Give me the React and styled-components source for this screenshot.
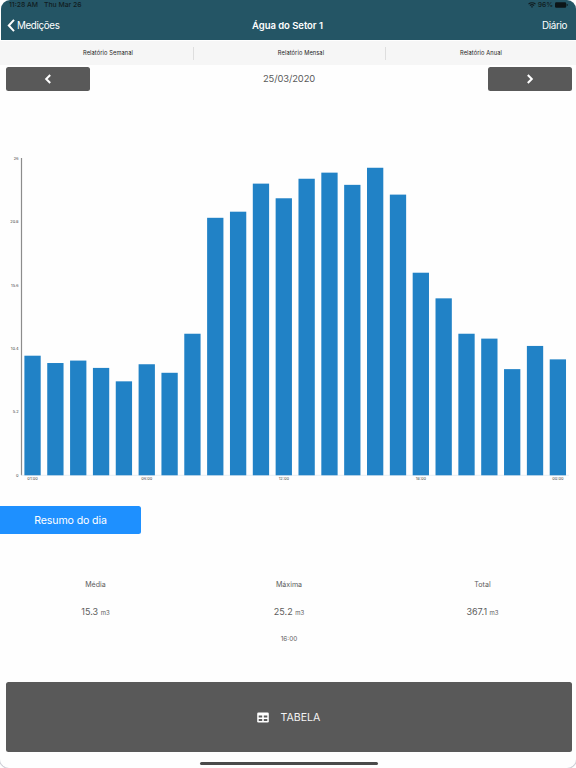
import React from "react";
import styled, { createGlobalStyle } from "styled-components";

// m3 per hour, from 01:00 to 00:00
const readings = [
    9.8, 9.2, 9.4, 8.8, 7.7, 9.1, 8.4, 11.6,
    21.1, 21.6, 23.9, 22.7, 24.3, 24.8, 23.8, 25.2,
    23.0, 16.6, 14.5, 11.6, 11.2, 8.7, 10.6, 9.5,
];

const yTicks = ["26", "20.8", "15.6", "10.4", "5.2", "0"];

const xTicks = [
    { bar: 0, label: "01:00" },
    { bar: 5, label: "06:00" },
    { bar: 11, label: "12:00" },
    { bar: 17, label: "18:00" },
    { bar: 23, label: "00:00" },
];

const reports = [
    { label: "Relatório Semanal", indent: "21px" },
    { label: "Relatório Mensal", indent: "23px" },
    { label: "Relatório Anual", indent: "1px" },
];

const summary = [
    { title: "Média", value: "15.3", unit: "m3" },
    { title: "Máxima", value: "25.2", unit: "m3", time: "16:00" },
    { title: "Total", value: "367.1", unit: "m3" },
];

const PLOT_TOP = 8;
const PLOT_HEIGHT = 317.3;
const BASELINE = PLOT_TOP + PLOT_HEIGHT;
const FIRST_BAR = 24.4;
const BAR_STEP = 22.84;
const BAR_WIDTH = 16.3;

function Chart() {
    return (
        <ChartSvg width="576" height="340" viewBox="0 0 576 340">
            <line x1="21.5" x2="21.5" y1={PLOT_TOP} y2={BASELINE} stroke="#8c8c8c" strokeWidth="1.2" />
            <line x1="21" x2="569" y1={BASELINE} y2={BASELINE} stroke="#d9e4ec" strokeWidth="0.6" />
            {yTicks.map((tick, i) => (
                <text key={tick} x="18.6" y={PLOT_TOP + (PLOT_HEIGHT / 5) * i + 1.6} textAnchor="end">
                    {tick}
                </text>
            ))}
            {readings.map((value, i) => {
                const height = (value / 26) * PLOT_HEIGHT;
                return (
                    <rect
                        key={i}
                        x={FIRST_BAR + BAR_STEP * i}
                        y={BASELINE - height}
                        width={BAR_WIDTH}
                        height={height}
                        fill="#2182c6"
                    />
                );
            })}
            {xTicks.map(({ bar, label }) => (
                <text
                    key={label}
                    x={FIRST_BAR + BAR_STEP * bar + BAR_WIDTH / 2}
                    y={BASELINE + 4.6}
                    textAnchor="middle"
                >
                    {label}
                </text>
            ))}
        </ChartSvg>
    );
}

function WifiIcon() {
    return (
        <svg width="8" height="6" viewBox="0 0 16 12">
            <path d="M1 4.2a10.5 10.5 0 0 1 14 0" fill="none" stroke="#101c20" strokeWidth="2.4" />
            <path d="M3.8 7.2a6.3 6.3 0 0 1 8.4 0" fill="none" stroke="#101c20" strokeWidth="2.2" />
            <path d="M5.8 9.2a3.4 3.4 0 0 1 4.4 0L8 11.8z" fill="#101c20" />
        </svg>
    );
}

function BatteryIcon() {
    return (
        <svg width="13" height="6" viewBox="0 0 13 6">
            <rect x="0" y="0.3" width="11.2" height="5.4" rx="1.3" fill="#0c1518" />
            <rect x="11.7" y="2" width="0.9" height="2" rx="0.4" fill="#0c1518" />
        </svg>
    );
}

function BackIcon() {
    return (
        <svg width="8" height="13" viewBox="0 0 8 13">
            <path d="M7 0.9 1.8 6.5l5.2 5.6" fill="none" stroke="#fff" strokeWidth="2" />
        </svg>
    );
}

function ArrowIcon({ next }) {
    return (
        <svg width="8" height="10" viewBox="0 0 8 10">
            <path
                d={next ? "M1.8 1 5.8 5l-4 4" : "M6.2 1 2.2 5l4 4"}
                fill="none"
                stroke="#fff"
                strokeWidth="2"
            />
        </svg>
    );
}

function TableIcon() {
    return (
        <svg width="12" height="11" viewBox="0 0 12 11">
            <rect x="0.2" y="0.4" width="11.6" height="10.2" rx="1.3" fill="#fff" />
            <path d="M1.7 3.4h3.5v2H1.7zM6.8 3.4h3.5v2H6.8zM1.7 6.9h3.5v2H1.7zM6.8 6.9h3.5v2H6.8z" fill="#595959" />
        </svg>
    );
}

export default function App() {
    return (
        <>
            <GlobalStyle />
            <Screen>
                <Header>
                    <StatusBar>
                        <StatusGroup $gap="6px">
                            <span>11:28 AM</span>
                            <span>Thu Mar 26</span>
                        </StatusGroup>
                        <StatusGroup $gap="2px">
                            <WifiIcon />
                            <span>96%</span>
                            <BatteryIcon />
                        </StatusGroup>
                    </StatusBar>
                    <NavBar>
                        <BackLink>
                            <BackIcon />
                            Medições
                        </BackLink>
                        <Title>Água do Setor 1</Title>
                        <Period>Diário</Period>
                    </NavBar>
                </Header>
                <Reports>
                    {reports.map(({ label, indent }) => (
                        <Report key={label} $indent={indent}>{label}</Report>
                    ))}
                </Reports>
                <DateRow>
                    <ArrowButton>
                        <ArrowIcon />
                    </ArrowButton>
                    <DateText>25/03/2020</DateText>
                    <ArrowButton>
                        <ArrowIcon next />
                    </ArrowButton>
                </DateRow>
                <Chart />
                <SummaryTag>Resumo do dia</SummaryTag>
                <Summary>
                    {summary.map(({ title, value, unit, time }) => (
                        <SummaryItem key={title}>
                            <SummaryTitle>{title}</SummaryTitle>
                            <SummaryValue>
                                {value} <small>{unit}</small>
                            </SummaryValue>
                            {time && <SummaryTime>{time}</SummaryTime>}
                        </SummaryItem>
                    ))}
                </Summary>
                <TableButton>
                    <TableIcon />
                    TABELA
                </TableButton>
                <HomeIndicator />
                <Corner $side="left" />
                <Corner $side="right" />
            </Screen>
        </>
    );
}

const GlobalStyle = createGlobalStyle`
  * {
    box-sizing: border-box;
  }

  body {
    margin: 0;
    background-color: #fefefe;
    font-family: Inter, "Liberation Sans", sans-serif;
  }

  button {
    border: none;
    padding: 0;
    font-family: inherit;
  }

  svg {
    display: block;
    flex-shrink: 0;
  }
`;

const Screen = styled.div`
  position: relative;
  width: 576px;
  height: 768px;
  display: flex;
  flex-direction: column;
  overflow: hidden;
  background-color: #fefefe;
`;

const Header = styled.header`
  height: 40px;
  margin-left: 1px;
  background-color: #245565;
  border-radius: 9px 9px 0 0;
`;

const StatusBar = styled.div`
  display: flex;
  justify-content: space-between;
  height: 10px;
  padding: 0 8px;
  color: #101c20;
  font-size: 6.8px;
  font-weight: 500;
  line-height: 10px;
`;

const StatusGroup = styled.div`
  display: flex;
  align-items: center;
  gap: ${({ $gap }) => $gap};
`;

const NavBar = styled.nav`
  display: grid;
  grid-template-columns: 1fr auto 1fr;
  align-items: center;
  height: 31px;
  padding: 0 9px 0 6px;
  color: white;
  font-size: 9.8px;
  letter-spacing: -0.35px;
`;

const BackLink = styled.div`
  display: flex;
  align-items: center;
  gap: 2px;
`;

const Title = styled.h1`
  margin: 0 0 0 1px;
  font-size: 9.5px;
  font-weight: 600;
  letter-spacing: -0.05px;
`;

const Period = styled.div`
  text-align: right;
`;

const Reports = styled.div`
  display: grid;
  grid-template-columns: repeat(3, 192px);
  align-items: center;
  height: 24px;
  margin-top: 1px;
  padding-left: 2px;
  background-color: #f6f6f6;
`;

const Report = styled.div`
  height: 13px;
  padding-left: ${({ $indent }) => $indent};
  color: #222;
  font-size: 5.7px;
  line-height: 12px;
  text-align: center;
  letter-spacing: 0.1px;

  &:not(:last-child) {
    border-right: 1px solid #dedede;
  }

  &:last-child {
    padding-right: 3px;
  }
`;

const DateRow = styled.div`
  display: flex;
  justify-content: space-between;
  height: 24px;
  margin: 2px 4px 0 6px;
`;

const ArrowButton = styled.button`
  display: flex;
  align-items: center;
  justify-content: center;
  width: 84px;
  height: 24px;
  border-radius: 2.5px;
  background-color: #595959;
`;

const DateText = styled.div`
  color: #5a5a5a;
  font-size: 9.4px;
  line-height: 23px;
  letter-spacing: -0.1px;
`;

const ChartSvg = styled.svg`
  margin-top: 59px;

  text {
    fill: #444;
    font-size: 4px;
  }
`;

const SummaryTag = styled.div`
  width: 141px;
  height: 28px;
  margin-top: 16px;
  border-radius: 0 2.5px 2.5px 0;
  background-color: #1e90ff;
  color: white;
  font-size: 10.6px;
  line-height: 29px;
  text-align: center;
  letter-spacing: -0.13px;
`;

const Summary = styled.div`
  display: grid;
  grid-template-columns: repeat(3, 193.5px);
  justify-content: center;
  height: 103px;
  margin-top: 45px;
  padding-left: 2px;
  color: #5c5c5c;
  text-align: center;
`;

const SummaryItem = styled.div`
  display: flex;
  flex-direction: column;
`;

const SummaryTitle = styled.div`
  font-size: 7.1px;
  line-height: 12px;
`;

const SummaryValue = styled.div`
  margin-top: 13px;
  font-size: 9px;
  line-height: 16px;

  small {
    font-size: 6px;
  }
`;

const SummaryTime = styled.div`
  margin-top: 12px;
  font-size: 6.4px;
  line-height: 12px;
`;

const TableButton = styled.button`
  display: flex;
  align-items: center;
  justify-content: center;
  gap: 12px;
  height: 70px;
  flex-shrink: 0;
  margin: 0 4px 0 6px;
  padding-right: 1px;
  border-radius: 2.5px;
  background-color: #595959;
  color: #f4f4f4;
  font-size: 10.6px;
`;

const HomeIndicator = styled.div`
  width: 178px;
  height: 3px;
  margin: 9.5px 0 0 200px;
  border-radius: 2px;
  background-color: #4a4a4a;
`;

// rounded edge of the device at the bottom of the screen
const Corner = styled.div`
  position: absolute;
  bottom: -1px;
  ${({ $side }) => $side}: -1px;
  width: 10px;
  height: 10px;
  border-bottom: 1px solid #cfd0d8;
  border-${({ $side }) => $side}: 1px solid #cfd0d8;
  border-bottom-${({ $side }) => $side}-radius: 10px;
`;
